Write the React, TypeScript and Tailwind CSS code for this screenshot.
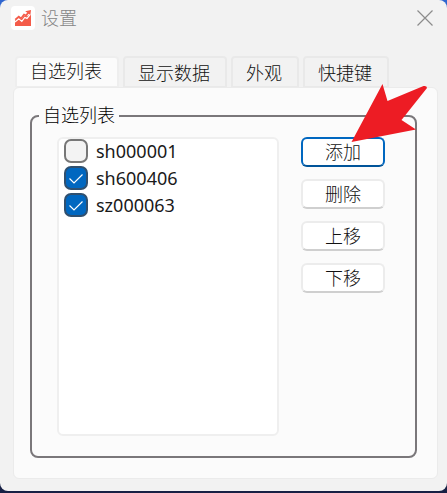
import React, { useState } from 'react';

interface Stock {
    code: string;
    checked: boolean;
}

const tabs = ['自选列表', '显示数据', '外观', '快捷键'];

const actions = ['添加', '删除', '上移', '下移'];

const initialStocks: Stock[] = [
    { code: 'sh000001', checked: false },
    { code: 'sh600406', checked: true },
    { code: 'sz000063', checked: true },
];

const ChartIcon: React.FC = () => (
    <svg className="w-6 h-6" viewBox="0 0 24 24" fill="none" aria-hidden="true">
        <rect width="24" height="24" rx="4" fill="#fff" />
        <path d="M4 14.5L7.8 11L10.5 13L13 9.2L15.2 10.2L20 8.5V20H4Z" fill="#f45b49" />
        <path d="M4 16L7.8 12.8L10.8 15.4L13.8 11.4L16 12.4L20 7.6" stroke="#fff" strokeWidth="1.2" />
        <path d="M4.2 13.6L7.8 10.6L10 12.4L13 8.4L15 9.4L18.4 5.6" stroke="#f45b49" strokeWidth="1.6" />
        <path d="M14.2 5.2L20 4L19.4 9Z" fill="#f45b49" />
    </svg>
);

const PointerArrow: React.FC = () => (
    <svg
        className="absolute left-[50px] top-[-54px] w-[76px] h-[60px] pointer-events-none"
        viewBox="0 0 76 60"
        aria-hidden="true"
    >
        <path
            d="M0.5 59L31.5 1L36.5 18L72.5 3Q76 2.5 76 5L50.5 37L65 46.5Z"
            fill="#ed1c24"
        />
    </svg>
);

const App: React.FC = () => {
    const [activeTab, setActiveTab] = useState(tabs[0]);
    const [stocks, setStocks] = useState<Stock[]>(initialStocks);

    const toggleStock = (code: string) => {
        setStocks(prev => prev.map(s => (s.code === code ? { ...s, checked: !s.checked } : s)));
    };

    return (
        <div className="min-h-screen flex flex-col pb-0.5 bg-linear-to-t from-[#172044] to-[#2f66d0] font-['Noto_Sans','Noto_Sans_CJK_SC',sans-serif] text-lg text-[#111111]">
            <div className="flex-1 flex flex-col rounded-lg bg-[#f2f2f2]">
                <header className="flex items-center h-9 pl-[11px] pr-3.5">
                    <ChartIcon />
                    <h1 className="ml-1.5 font-light text-[#858585]">设置</h1>
                    <button type="button" aria-label="关闭" className="ml-auto">
                        <svg className="w-4 h-4" viewBox="0 0 16 16" fill="none" stroke="#8c8c8c" strokeWidth="1.2">
                            <path d="M0.5 0.5L15.5 15.5M15.5 0.5L0.5 15.5" />
                        </svg>
                    </button>
                </header>

                <div role="tablist" className="flex gap-1 mt-5 pl-[15px]">
                    {tabs.map(tab => (
                        <button
                            key={tab}
                            type="button"
                            role="tab"
                            aria-selected={activeTab === tab}
                            onClick={() => setActiveTab(tab)}
                            className={`h-[31px] pl-[13px] pr-[15px] flex items-center border-2 border-b rounded-t-sm font-light ${activeTab === tab ? 'bg-[#fbfbfb] border-[#eeeeee] pb-0.5' : 'bg-[#f2f2f2] border-[#e9e9e9] pt-0.5'}`}
                        >
                            {tab}
                        </button>
                    ))}
                </div>

                <main className="flex-1 flex ml-[13px] mr-[9px] mb-3 pl-4 pr-5 pt-3.5 pb-5 rounded-md border border-[#ebebeb] bg-[#fbfbfb]">
                    <fieldset className="flex-1 min-w-0 rounded-lg border-2 border-[#7a777a] px-2.5 pb-5">
                        <legend className="h-[27px] px-1 -ml-[3px] leading-[27px] font-light text-black">自选列表</legend>
                        <div className="flex h-full pl-[15px] pt-2 pr-5 gap-[22px]">
                            <ul className="flex-1 rounded-md border-2 border-[#efefef] bg-white pl-[5px]">
                                {stocks.map(({ code, checked }) => (
                                    <li key={code}>
                                        <label className="flex items-start h-[27px]">
                                            <span className="relative flex">
                                                <input
                                                    type="checkbox"
                                                    checked={checked}
                                                    onChange={() => toggleStock(code)}
                                                    className="appearance-none w-6 h-6 rounded-[7px] border-2 border-[#777777] bg-[#f3f3f3] checked:border-[#30506f] checked:bg-[#0067c0]"
                                                />
                                                {checked && (
                                                    <svg
                                                        className="absolute inset-0 w-6 h-6 pointer-events-none"
                                                        viewBox="0 0 24 24"
                                                        fill="none"
                                                        stroke="#fff"
                                                        strokeWidth="1.2"
                                                    >
                                                        <path d="M5.5 12.5L10 17L18.5 8.5" />
                                                    </svg>
                                                )}
                                            </span>
                                            <span className="ml-2 leading-6 text-[#1a1a1a]">{code}</span>
                                        </label>
                                    </li>
                                ))}
                            </ul>
                            <div className="w-[84px] flex flex-col gap-3">
                                {actions.map((action, index) => (
                                    <div key={action} className="relative">
                                        <button
                                            type="button"
                                            className={`w-full h-[30px] flex items-center justify-center rounded-md bg-white font-light border-2 ${index === 0 ? 'border-[#0067c0] border-b-[#005499]' : 'border-[#ececec] border-b-[#cfcfcf]'}`}
                                        >
                                            {action}
                                        </button>
                                        {index === 0 && <PointerArrow />}
                                    </div>
                                ))}
                            </div>
                        </div>
                    </fieldset>
                </main>
            </div>
        </div>
    );
};

export default App;
